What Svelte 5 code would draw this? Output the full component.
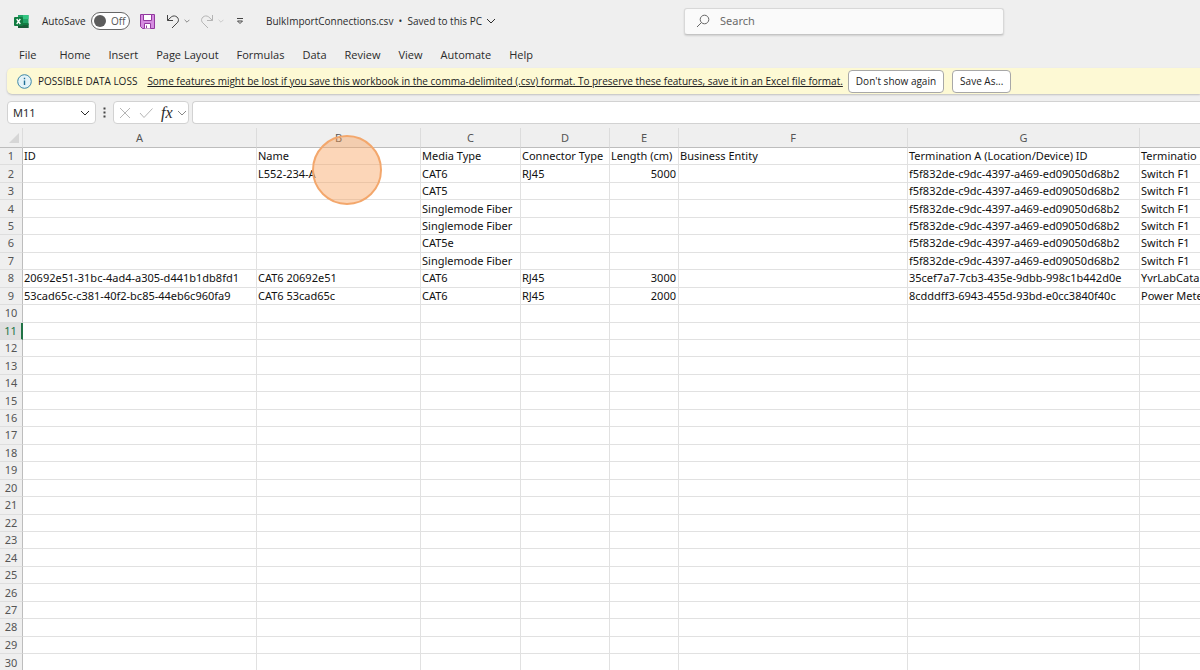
<script>
  const tabs = ['File', 'Home', 'Insert', 'Page Layout', 'Formulas', 'Data', 'Review', 'View', 'Automate', 'Help'];
  const columns = [
    { letter: 'A', width: '234px' },
    { letter: 'B', width: '164px' },
    { letter: 'C', width: '100px' },
    { letter: 'D', width: '89px' },
    { letter: 'E', width: '69px' },
    { letter: 'F', width: '229px' },
    { letter: 'G', width: '232px' },
    { letter: '', width: 'auto' }
  ];
  const device = 'f5f832de-c9dc-4397-a469-ed09050d68b2';
  const data = [
    ['ID', 'Name', 'Media Type', 'Connector Type', 'Length (cm)', 'Business Entity', 'Termination A (Location/Device) ID', 'Terminatio'],
    ['', 'L552-234-A', 'CAT6', 'RJ45', '5000', '', device, 'Switch F1'],
    ['', '', 'CAT5', '', '', '', device, 'Switch F1'],
    ['', '', 'Singlemode Fiber', '', '', '', device, 'Switch F1'],
    ['', '', 'Singlemode Fiber', '', '', '', device, 'Switch F1'],
    ['', '', 'CAT5e', '', '', '', device, 'Switch F1'],
    ['', '', 'Singlemode Fiber', '', '', '', device, 'Switch F1'],
    ['20692e51-31bc-4ad4-a305-d441b1db8fd1', 'CAT6 20692e51', 'CAT6', 'RJ45', '3000', '', '35cef7a7-7cb3-435e-9dbb-998c1b442d0e', 'YvrLabCata'],
    ['53cad65c-c381-40f2-bc85-44eb6c960fa9', 'CAT6 53cad65c', 'CAT6', 'RJ45', '2000', '', '8cdddff3-6943-455d-93bd-e0cc3840f40c', 'Power Mete']
  ];
  const rows = Array.from({ length: 30 }, (_, i) => data[i] ?? columns.map(() => ''));
  const activeRow = 11;
  let autoSave = $state(false);
  let reference = $state('M11');
  let formula = $state('');
  let query = $state('');
</script>

{#snippet chevron(size)}
  <svg class="chevron" width={size} height={size} viewBox="0 0 10 10" aria-hidden="true"><path d="M1 3l4 4 4-4" /></svg>
{/snippet}

<div class="app">
  <header class="titlebar">
    <svg class="logo" width="15" height="15" viewBox="0 0 15 15" aria-hidden="true">
      <path fill="#21a366" d="M4 1h10.500v13H4z" />
      <path fill="#33c481" d="M9 1h5.500v4H9z" />
      <path fill="#107c41" d="M4 5h5v5H4z" />
      <path fill="#185c37" d="M4 10h10.500v4H4z" />
      <path fill="#107c41" d="M9 9h5.500v2H9z" />
      <rect y="3" width="9" height="9" rx="1" fill="#107c41" />
      <path d="M2.700 5l3.600 5M6.300 5l-3.600 5" stroke="#fff" stroke-width="1.300" />
    </svg>
    <label class="autosave">
      AutoSave
      <span class="switch" class:on={autoSave}>
        <input type="checkbox" bind:checked={autoSave} />
        <span class="knob"></span>{autoSave ? 'On' : 'Off'}
      </span>
    </label>
    <button class="icon save" aria-label="Save">
      <svg width="15" height="15" viewBox="0 0 15 15"><path fill="#d58be0" stroke="#92389f" d="M.5.500h14v14H2.500l-2-2z" /><path fill="#fff" stroke="#92389f" d="M3.500.500h8v6h-8zM4.500 14.500V9.500h6v5" /><path stroke="#92389f" d="M6.500 11.500V14" /></svg>
    </button>
    <button class="icon undo" aria-label="Undo">
      <svg width="14" height="15" viewBox="0 0 14 15"><path d="M1.500 1v5.500H7M1.500 6.500l3.800-3.600c4-3 9 1.600 6.500 5.300L6 14" /></svg>
      {@render chevron(6)}
    </button>
    <button class="icon redo" aria-label="Redo" disabled>
      <svg width="14" height="15" viewBox="0 0 14 15"><path d="M12.500 1v5.500H7M12.500 6.500L8.700 2.900c-4-3-9 1.600-6.500 5.300L8 14" /></svg>
      {@render chevron(6)}
    </button>
    <button class="icon customize" aria-label="Customize Quick Access Toolbar">
      <svg width="8" height="8" viewBox="0 0 8 8"><path d="M1 1.500h6M1.500 4L4 6.500 6.500 4z" /></svg>
    </button>
    <button class="document">BulkImportConnections.csv&nbsp;&nbsp;•&nbsp;&nbsp;Saved to this PC {@render chevron(10)}</button>
    <label class="search">
      <svg width="14" height="14" viewBox="0 0 14 14" aria-hidden="true"><circle cx="8.500" cy="5.500" r="4.300" /><path d="M5.500 8.500L1 13" /></svg>
      <input type="text" placeholder="Search" aria-label="Search" bind:value={query} />
    </label>
  </header>

  <nav class="tabs">
    {#each tabs as tab}<button>{tab}</button>{/each}
  </nav>

  <section class="notice">
    <svg width="15" height="15" viewBox="0 0 15 15" aria-hidden="true"><circle cx="7.500" cy="7.500" r="6.800" fill="#e4f3f8" stroke="#3c87a8" /><path d="M7.500 6.500V11M7.500 3.700v1.500" stroke="#1f6f95" stroke-width="1.400" /></svg>
    <strong>POSSIBLE DATA LOSS</strong>
    <a href="#formats">Some features might be lost if you save this workbook in the comma-delimited (.csv) format. To preserve these features, save it in an Excel file format.</a>
    <button>Don't show again</button>
    <button>Save As...</button>
  </section>

  <div class="formula-bar">
    <label class="box name-box">
      <input type="text" aria-label="Name Box" bind:value={reference} />
      {@render chevron(10)}
    </label>
    <svg class="dots" width="3" height="11" viewBox="0 0 3 11" aria-hidden="true"><path d="M.5.500h2v2h-2zM.5 4.500h2v2h-2zM.5 8.500h2v2h-2z" /></svg>
    <div class="box tools">
      <button aria-label="Cancel" disabled><svg width="12" height="12" viewBox="0 0 12 12"><path d="M1 1l10 10M11 1L1 11" /></svg></button>
      <button aria-label="Enter" disabled><svg width="14" height="12" viewBox="0 0 14 12"><path d="M1 6l4 4.500L13.500 1.500" /></svg></button>
      <button class="fx" aria-label="Insert Function"><i>fx</i>{@render chevron(10)}</button>
    </div>
    <input class="box formula" type="text" aria-label="Formula" bind:value={formula} />
  </div>

  <main class="sheet">
    <table>
      <colgroup>
        <col class="numbers" />
        {#each columns as column}<col style:width={column.width} />{/each}
      </colgroup>
      <thead>
        <tr>
          <th class="corner" aria-label="Select all"><svg width="10" height="10" viewBox="0 0 10 10"><path d="M10 0v10H0z" fill="#d6d6d6" /></svg></th>
          {#each columns as column}<th scope="col">{column.letter}</th>{/each}
        </tr>
      </thead>
      <tbody>
        {#each rows as row, i}
          <tr>
            <th scope="row" class:active={i + 1 === activeRow}>{i + 1}</th>
            {#each row as cell, c}<td class:number={c === 4 && i > 0}>{cell}</td>{/each}
          </tr>
        {/each}
      </tbody>
    </table>
    <div class="click-marker"></div>
  </main>
</div>

<style>
  :global(body) { margin: 0; background: #efefef; overflow: hidden; }
  .app {
    display: flex;
    flex-direction: column;
    height: 100vh;
    overflow: hidden;
    font: 11px/16px "Noto Sans", sans-serif;
    color: #2b2b2b;
  }
  button, input { font: inherit; color: inherit; margin: 0; box-sizing: border-box; }
  button { border: 0; background: none; padding: 0; white-space: nowrap; }
  svg { display: block; flex: none; fill: none; stroke-width: 1; }
  .chevron { stroke: currentColor; }

  .titlebar, .notice { font-family: "Open Sans", sans-serif; font-size: 10px; }
  .titlebar { display: flex; align-items: center; height: 42px; flex: none; padding: 0 14px; }
  .autosave { display: flex; align-items: center; width: 88px; margin-left: 13px; justify-content: space-between; }
  .switch {
    position: relative;
    display: flex;
    flex: none;
    align-items: center;
    gap: 5px;
    box-sizing: border-box;
    width: 39px;
    height: 18px;
    padding-left: 2px;
    border: 1px solid #666;
    border-radius: 9px;
    background: #fff;
    color: #555;
  }
  .switch.on { flex-direction: row-reverse; }
  .switch input { position: absolute; inset: 0; opacity: 0; }
  .knob { width: 12px; height: 12px; border-radius: 50%; background: #5c5c5c; }
  .icon { display: flex; align-items: center; gap: 4px; }
  .icon svg { stroke: #444; }
  .save { margin-left: 10px; }
  .undo { margin-left: 11px; }
  .redo { margin-left: 10px; }
  .redo svg { stroke: #b4b4b4; }
  .customize { margin-left: 12px; }
  .document { display: flex; align-items: center; gap: 4px; width: 228px; margin-left: 22px; }
  .search {
    display: flex;
    align-items: center;
    gap: 10px;
    box-sizing: border-box;
    width: 320px;
    height: 27px;
    margin-left: 190px;
    padding: 0 11px;
    border: 1px solid #d8d8d8;
    border-bottom-color: #c4c4c4;
    border-radius: 3px;
    background: #fafafa;
    box-shadow: 0 1px 2px #0002;
    font-family: "Noto Sans", sans-serif;
    font-size: 11px;
  }
  .search svg { stroke: #666; }
  .search input { flex: 1; min-width: 0; border: 0; padding: 0; background: none; outline: 0; }
  .search input::placeholder { color: #6b6b6b; opacity: 1; }

  .tabs { display: flex; align-items: center; height: 26px; flex: none; padding-left: 10px; font-family: "Open Sans", sans-serif; }
  .tabs button { padding: 0 9px; }
  .tabs button:first-child { padding-right: 14px; }

  .notice {
    display: flex;
    align-items: center;
    flex: none;
    height: 26px;
    margin-left: 7px;
    padding-left: 10px;
    border-radius: 5px 0 0 5px;
    background: #fdf9d4;
    box-shadow: 0 1px 2px #0003;
    color: #222;
    white-space: nowrap;
  }
  .notice strong { margin: 0 10px 0 6px; font-weight: 400; }
  .notice a { margin-right: 5px; color: inherit; text-underline-offset: 1px; }
  .notice button {
    height: 23px;
    margin-right: 8px;
    padding: 0 7px;
    border: 1px solid #a8a8a8;
    border-radius: 4px;
    background: #fff;
  }

  .formula-bar { display: flex; align-items: center; flex: none; height: 23px; padding: 7px 0 2px 7px; }
  .box { display: flex; align-items: center; box-sizing: border-box; height: 23px; border: 1px solid #d2d2d2; border-radius: 4px; background: #fff; }
  .name-box { width: 89px; padding: 0 5px; }
  .name-box input { flex: 1; min-width: 0; border: 0; padding: 0; background: none; outline: 0; }
  .dots { margin: 0 7px; fill: #444; }
  .tools { width: 76px; padding: 0 2px 0 5px; gap: 8px; }
  .tools svg { stroke: #b5b5b5; }
  .fx { display: flex; align-items: center; gap: 4px; }
  .fx i { font: italic 16px/20px "Liberation Serif", serif; }
  .fx :global(svg) { stroke: #888; }
  .formula { flex: 1; min-width: 0; margin-left: 3px; border-right: 0; border-radius: 4px 0 0 4px; }

  .sheet { position: relative; flex: 1; min-height: 0; overflow: hidden; padding-top: 2px; }
  table { table-layout: fixed; width: 100%; height: 544px; border-spacing: 0; background: #fff; }
  .numbers { width: 23px; }
  th, td { box-sizing: border-box; padding: 0; white-space: nowrap; line-height: 16px; }
  th { background: #efefef; color: #555; font-size: 11px; font-weight: 400; }
  thead th { height: 20px; border-right: 1px solid #dcdcdc; border-bottom: 1px solid #bdbdbd; }
  .corner svg { margin-left: 9px; }
  tbody th { border-right: 1px solid #bdbdbd; border-bottom: 1px solid #dedede; }
  tbody th.active { border-right: 2px solid #217346; background: #dfdfdf; color: #217346; }
  td { padding-left: 1px; border-right: 1px solid #e1e1e1; border-bottom: 1px solid #e1e1e1; font-family: "Noto Sans", sans-serif; font-size: 11px; color: #111; }
  thead th:last-child, td:last-child { border-right: 0; }
  .number { padding-right: 2px; text-align: right; }
  .click-marker {
    position: absolute;
    left: 312px;
    top: 9px;
    box-sizing: border-box;
    width: 70px;
    height: 70px;
    border: 2px solid #f3a76c;
    border-radius: 50%;
    background: #f9a25d70;
  }
</style>
